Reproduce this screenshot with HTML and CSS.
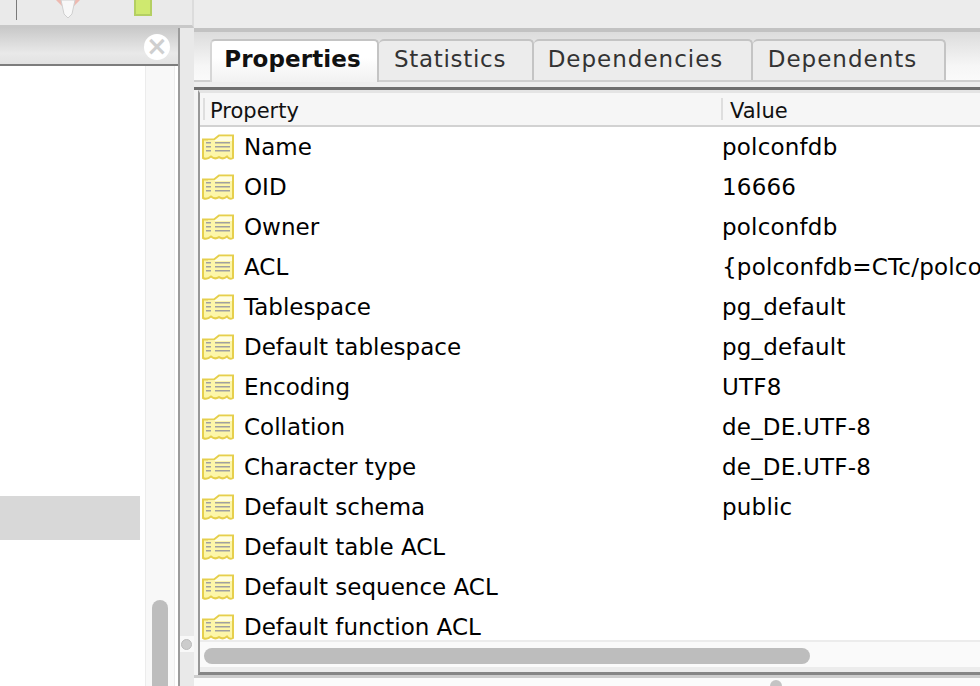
FILE: index.html
```html
<!DOCTYPE html>
<html lang="en">
<head>
<meta charset="utf-8">
<title>Properties</title>
<link rel="stylesheet" href="styles.css">
</head>
<body>
<svg class="defs" width="0" height="0" aria-hidden="true">
  <symbol id="prop" viewBox="0 0 32 26">
    <path d="M1 5.500H12L17 1.500H31V24Q27.500 26 25 22.500 21 26 17 23 13 26 9 22.500 5 26 1 24Z" fill="#fdf6a8" stroke="#e6cf4c" stroke-width="2"/>
    <path d="M17.500 2.500H30V7H6V6.500H12.500Z" fill="#fffde2"/>
    <path d="M4 8h5v1.500H4zM4 12h5v1.500H4zM4 16h5v1.500H4zM13 8h15v1.500H13zM13 12h15v1.500H13zM13 16h15v1.500H13z" fill="#a0a0a0"/>
  </symbol>
</svg>
<div class="app">
  <div class="top">
    <div class="toolbar">
      <span class="tool-sep"></span>
      <svg class="pin" width="26" height="20" viewBox="0 0 26 20"><path d="M1 0 7 6 10 0ZM25 0 19 6 16 0Z" fill="#eeb9b0"/><path d="M6 0H20L17 14 13 18 9 14Z" fill="#f8f8f8" stroke="#cfcfcf"/></svg>
      <span class="green"></span>
    </div>
    <div class="top-rest"></div>
  </div>
  <div class="main">
    <section class="left">
      <div class="left-head"><span class="close">×</span></div>
      <div class="left-body">
        <div class="tree"><div class="selected"></div></div>
        <div class="vscroll"><div class="vthumb"></div></div>
      </div>
    </section>
    <div class="splitter"><span class="grip"><i></i></span></div>
    <section class="right">
      <div class="tabs">
        <div class="tab active">Properties</div>
        <div class="tab t2">Statistics</div>
        <div class="tab t3">Dependencies</div>
        <div class="tab t4">Dependents</div>
      </div>
      <div class="tabline"></div>
      <div class="panel">
        <div class="thead">
          <div class="th th-prop">Property</div>
          <div class="th th-val">Value</div>
        </div>
        <div class="rows">
          <div class="row"><svg class="ico"><use href="#prop"/></svg><span class="k">Name</span><span class="v">polconfdb</span></div>
          <div class="row"><svg class="ico"><use href="#prop"/></svg><span class="k">OID</span><span class="v">16666</span></div>
          <div class="row"><svg class="ico"><use href="#prop"/></svg><span class="k">Owner</span><span class="v">polconfdb</span></div>
          <div class="row"><svg class="ico"><use href="#prop"/></svg><span class="k">ACL</span><span class="v">{polconfdb=CTc/polconfdb}</span></div>
          <div class="row"><svg class="ico"><use href="#prop"/></svg><span class="k">Tablespace</span><span class="v">pg_default</span></div>
          <div class="row"><svg class="ico"><use href="#prop"/></svg><span class="k">Default tablespace</span><span class="v">pg_default</span></div>
          <div class="row"><svg class="ico"><use href="#prop"/></svg><span class="k">Encoding</span><span class="v">UTF8</span></div>
          <div class="row"><svg class="ico"><use href="#prop"/></svg><span class="k">Collation</span><span class="v">de_DE.UTF-8</span></div>
          <div class="row"><svg class="ico"><use href="#prop"/></svg><span class="k">Character type</span><span class="v">de_DE.UTF-8</span></div>
          <div class="row"><svg class="ico"><use href="#prop"/></svg><span class="k">Default schema</span><span class="v">public</span></div>
          <div class="row"><svg class="ico"><use href="#prop"/></svg><span class="k">Default table ACL</span><span class="v"></span></div>
          <div class="row"><svg class="ico"><use href="#prop"/></svg><span class="k">Default sequence ACL</span><span class="v"></span></div>
          <div class="row"><svg class="ico"><use href="#prop"/></svg><span class="k">Default function ACL</span><span class="v"></span></div>
        </div>
        <div class="hscroll"><div class="hthumb"></div></div>
      </div>
      <div class="bottom"><span class="knob"></span></div>
    </section>
  </div>
</div>
</body>
</html>
```

FILE: styles.css
```css
* { box-sizing: border-box; }
html, body { margin: 0; padding: 0; }
body { width: 980px; height: 686px; overflow: hidden; background: #ececec; font-family: "DejaVu Sans", sans-serif; color: #111; }
.defs { display: block; height: 0; }
.app { width: 980px; height: 686px; display: flex; flex-direction: column; overflow: hidden; }

.top { display: flex; height: 28px; flex: none; }
.toolbar { width: 194px; flex: none; display: flex; align-items: flex-start; background: #eaeaea; border-right: 2px solid #dcdcdc; border-bottom: 3px solid #c8c8c8; }
.tool-sep { width: 1px; height: 20px; background: #7a7a7a; margin-left: 16px; }
.pin { margin-left: 38px; }
.green { width: 18px; height: 16px; margin-left: 53px; background: #cfe96f; border: 2px solid #b4cf62; border-top: 0; }
.top-rest { flex: 1; background: #ececec; }

.main { flex: 1; display: flex; min-height: 0; }

.left { width: 180px; flex: none; display: flex; flex-direction: column; border-right: 2px solid #9b9b9b; }
.left-head { height: 38px; flex: none; display: flex; justify-content: flex-end; align-items: flex-start; padding: 6px 8px 0 0; background: linear-gradient(#c9c9c9, #e9e9e9 70%, #e2e2e2); border-bottom: 2px solid #7d7d7d; }
.close { width: 26px; height: 26px; border-radius: 50%; background: #fff; color: #cfcfcf; font: bold 26px/25px "DejaVu Sans", sans-serif; text-align: center; }
.left-body { flex: 1; display: flex; background: #fff; min-height: 0; }
.tree { width: 145px; flex: none; padding-top: 430px; }
.selected { width: 140px; height: 44px; background: #d8d8d8; }
.vscroll { width: 30px; flex: none; background: #f8f8f8; border-left: 1px solid #ececec; border-right: 1px solid #ececec; padding: 534px 6px 0 6px; }
.vthumb { height: 100px; background: #bdbdbd; border-radius: 8px 8px 0 0; }

.splitter { width: 14px; flex: none; background: #e9e9e9; padding-top: 608px; }
.grip { display: flex; align-items: center; justify-content: center; height: 16px; padding-right: 1px; background: #f8f8f8; }
.grip i { width: 11px; height: 11px; border-radius: 50%; background: #cccccc; border: 1px solid #bbb; }

.right { flex: 1; min-width: 0; display: flex; flex-direction: column; border-top: 4px solid #c2c2c2; background: #f4f4f4; }
.tabs { height: 50px; flex: none; display: flex; align-items: flex-start; padding: 7px 0 0 16px; background: linear-gradient(#dcdcdc, #f6f6f6 70%, #fafafa); border-bottom: 2px solid #cfcfcf; }
.tab { height: 41px; padding-top: 3px; border: 2px solid #c4c4c4; border-bottom: 0; border-left: 0; border-radius: 5px 5px 0 0; background: #ececec; color: #333; font-size: 23px; line-height: 30px; text-align: center; letter-spacing: 1px; }
.tab.active { width: 169px; height: 43px; padding-right: 4px; background: linear-gradient(#fff, #fff 40%, #f1f1f1); color: #111; font-weight: bold; letter-spacing: .1px; border-left: 2px solid #d6d6d6; }
.t2 { width: 155px; padding-right: 11px; letter-spacing: .7px; }
.t3 { width: 219px; padding-right: 14px; }
.t4 { width: 193px; padding-right: 12px; }
.tabline { height: 8px; flex: none; margin-bottom: 0; background: #eeeeee; border-bottom: 3px solid #6f6f6f; }

.panel { height: 585px; flex: none; margin-left: 4px; border-left: 2px solid #989898; border-top: 3px solid #e4e4e4; border-bottom: 3px solid #868686; display: flex; flex-direction: column; background: #fff; overflow: hidden; }
.thead { height: 34px; flex: none; display: flex; background: #f6f6f6; border-bottom: 2px solid #d2d2d2; font-size: 21px; }
.th { padding-left: 7px; border-left: 2px solid #dedede; margin-top: 5px; line-height: 26px; height: 22px; }
.th-prop { width: 518px; margin-left: 3px; padding-left: 5px; }
.th-val { flex: 1; }
.rows { flex: 1; min-height: 0; overflow: hidden; }
.row { height: 40px; display: flex; align-items: center; font-size: 23px; white-space: nowrap; color: #000; }
.ico { width: 32px; height: 26px; margin-left: 2px; flex: none; }
.k { width: 478px; margin-left: 10px; flex: none; }
.v { flex: none; letter-spacing: .2px; }
.hscroll { height: 32px; flex: none; background: #fafafa; border-top: 2px solid #ececec; border-bottom: 5px solid #ececec; padding: 6px 0 0 4px; }
.hthumb { width: 606px; height: 16px; background: #bdbdbd; border-radius: 8px; }
.bottom { flex: 1; background: #fbfbfb; border-top: 3px solid #cdcdcd; padding-left: 576px; }
.knob { display: block; width: 12px; height: 6px; margin-top: 2px; border-radius: 6px 6px 0 0; background: #c4c4c4; }
```
